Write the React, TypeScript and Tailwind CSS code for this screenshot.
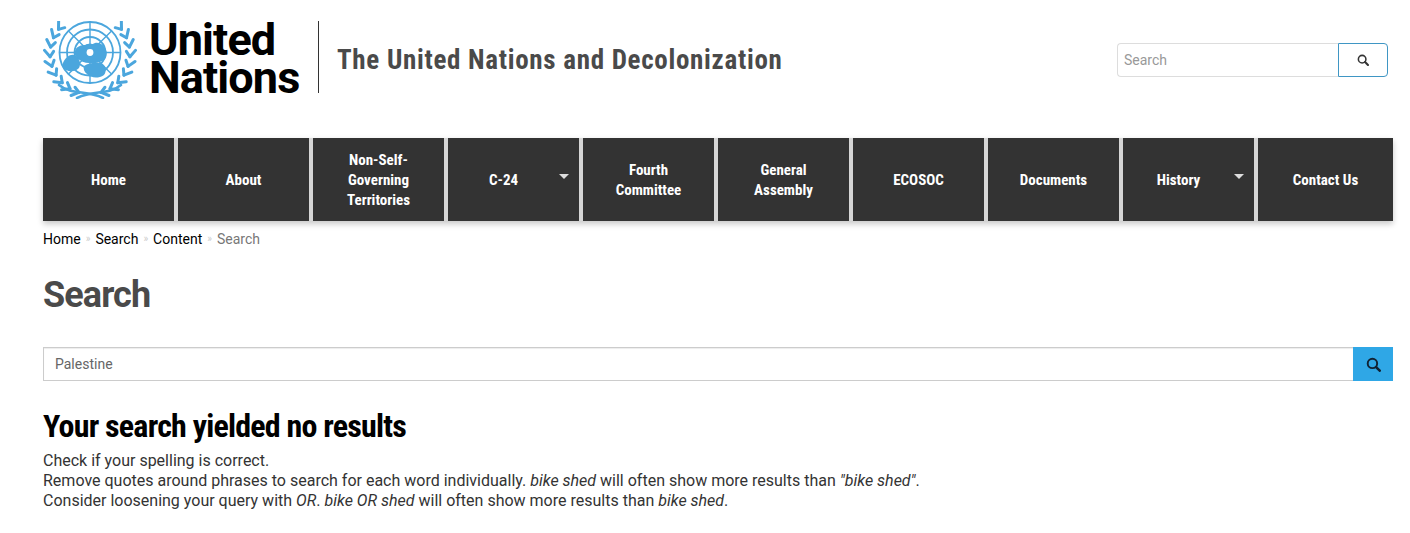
import { Fragment } from "react";

const navItems = [
  { label: "Home" },
  { label: "About" },
  { label: "Non-Self-\nGoverning\nTerritories" },
  { label: "C-24", caret: true },
  { label: "Fourth\nCommittee" },
  { label: "General\nAssembly" },
  { label: "ECOSOC" },
  { label: "Documents" },
  { label: "History", caret: true },
  { label: "Contact Us" },
];

const crumbs = ["Home", "Search", "Content"];

const condensed = "[font-family:'Roboto_Condensed',Roboto,sans-serif] [font-stretch:75%]";

function WreathHalf() {
  const angles = [74, 60, 46, 32, 18, 4, -10, -24, -38];
  return (
    <g stroke="#4ba6dd" strokeLinecap="round" fill="none">
      {angles.map((deg) => {
        const a = (deg * Math.PI) / 180;
        const x = 47 - 40 * Math.cos(a);
        const y = 33 + 40 * Math.sin(a);
        const tx = -Math.sin(a);
        const ty = -Math.cos(a);
        const nx = -Math.cos(a);
        const ny = Math.sin(a);
        return (
          <g key={deg} strokeWidth="3">
            <line x1={x} y1={y} x2={x + 8.5 * (tx * 0.8 + nx * 0.6)} y2={y + 8.5 * (ty * 0.8 + ny * 0.6)} />
            <line x1={x} y1={y} x2={x + 6.5 * (tx * 0.8 - nx * 0.6)} y2={y + 6.5 * (ty * 0.8 - ny * 0.6)} />
          </g>
        );
      })}
      <path d="M16 64C28 74 44 69 60 77" strokeWidth="2.6" />
    </g>
  );
}

function UnLogo() {
  return (
    <svg width="94" height="78" viewBox="0 0 94 78" className="shrink-0">
      <WreathHalf />
      <g transform="translate(94) scale(-1,1)">
        <WreathHalf />
      </g>
      <circle cx="47" cy="31.5" r="33" fill="#fff" />
      <g fill="none" stroke="#4ba6dd" strokeWidth="1.8">
        <circle cx="47" cy="31.5" r="30.5" />
        <circle cx="47" cy="31.5" r="23" />
        <circle cx="47" cy="31.5" r="15.5" />
        <circle cx="47" cy="31.5" r="8" />
        <path d="M47 -1V63M16 31.5H78M25.5 10L68.5 53M68.5 10L25.5 53" strokeWidth="1.4" />
      </g>
      <g fill="#4ba6dd">
        <path d="M32 30C33 25 39 24 42 24C46 22 49 24 52 22C57 21 61 24 63 29C65 33 63 39 59 40C54 43 50 42 46 42C42 42 37 40 34 37C32 35 31 32 32 30Z" />
        <path d="M20 42C23 35 29 32 33 35C37 38 38 43 36 47C32 51 27 51 23 49C19 48 19 44 20 42Z" />
        <path d="M41 45C46 41 53 42 58 42C63 44 64 50 61 54C55 58 48 57 44 53C41 51 40 47 41 45Z" />
      </g>
      <circle cx="47" cy="31.5" r="3.4" fill="#fff" />
    </svg>
  );
}

function SearchGlyph({ className }: { className: string }) {
  return (
    <svg viewBox="0 0 14 14" className={className} fill="none" stroke="currentColor">
      <circle cx="6" cy="6" r="4.4" strokeWidth="1.8" />
      <path d="M9.4 9.4L12.8 12.8" strokeWidth="2.4" strokeLinecap="round" />
    </svg>
  );
}

export default function App() {
  return (
    <div className="min-h-[533px] w-[1410px] overflow-hidden bg-white pl-[43px] pr-[17px] font-['Roboto',sans-serif] text-[#333]">
      <header className="flex h-[138px] items-start">
        <div className="mt-[21px] flex items-start">
          <UnLogo />
          <div className="ml-[12px] mt-[2px] flex h-[72px] w-[169px] flex-col justify-center text-[45px] font-bold leading-[38px] tracking-[-0.9px] text-black">
            <span>United</span>
            <span>Nations</span>
          </div>
          <div className="h-[72px] w-px bg-[#333]" />
          <h1 className={`ml-[18px] mt-[21px] text-[27px] font-bold leading-[36px] tracking-[0.7px] text-[#4a4a4a] ${condensed}`}>
            The United Nations and Decolonization
          </h1>
        </div>
        <form className="ml-auto mr-[5px] mt-[43px] flex h-[34px] w-[271px]">
          <input
            readOnly
            placeholder="Search"
            className="h-full w-[221px] rounded-l border border-r-0 border-[#ddd] px-[6px] text-sm text-[#333] placeholder:text-[#999]"
          />
          <button type="button" className="flex h-full w-[50px] items-center justify-center rounded-r border border-[#3f96c4] bg-white">
            <SearchGlyph className="h-3 w-3 text-[#333]" />
          </button>
        </form>
      </header>

      <nav className="flex h-[83px] gap-1 bg-[#d6d6d6] shadow-[0_3px_6px_rgba(0,0,0,0.22)]">
        {navItems.map((item, index) => (
          <a
            key={index}
            href="#"
            className={`relative flex h-full items-center justify-center whitespace-pre-line bg-[#333] text-center text-[15px] font-bold leading-[20px] text-white ${condensed} ${index === 9 ? "w-[135px]" : "w-[131px]"} ${item.caret ? "pr-5" : ""}`}
          >
            {item.label}
            {item.caret && (
              <span className="absolute right-[10px] top-[36px] h-0 w-0 border-x-[5px] border-t-[5px] border-x-transparent border-t-[#ddd]" />
            )}
          </a>
        ))}
      </nav>

      <div className="mt-[9px] flex items-center text-sm leading-[18px] text-black">
        {crumbs.map((crumb) => (
          <Fragment key={crumb}>
            <span>{crumb}</span>
            <span className="mx-[5px] text-[10px] text-[#ccc]">»</span>
          </Fragment>
        ))}
        <span className="text-[#777]">Search</span>
      </div>

      <h2 className="mt-[25px] text-[36px] font-bold leading-[44px] tracking-[-0.9px] text-[#4a4a4a]">Search</h2>

      <form className="mt-[30px] flex h-[34px] w-[1350px]">
        <input
          readOnly
          value="Palestine"
          className="h-full flex-1 border border-r-0 border-[#ccc] px-[11px] text-sm text-[#666] shadow-[inset_0_1px_1px_rgba(0,0,0,0.075)]"
        />
        <button type="button" className="flex h-full w-10 items-center justify-center bg-[#2fa7e6]">
          <SearchGlyph className="h-[15px] w-[15px] text-[#123]" />
        </button>
      </form>

      <h3 className={`mt-[27px] text-[32px] font-bold leading-[36px] tracking-[-0.78px] text-black ${condensed}`}>Your search yielded no results</h3>

      <div className="mt-[7px] text-base leading-5 text-[#333]">
        <p>Check if your spelling is correct.</p>
        <p>
          Remove quotes around phrases to search for each word individually. <em>bike shed</em> will often show more results than <em>"bike shed"</em>.
        </p>
        <p>
          Consider loosening your query with <em>OR</em>. <em>bike OR shed</em> will often show more results than <em>bike shed</em>.
        </p>
      </div>
    </div>
  );
}
